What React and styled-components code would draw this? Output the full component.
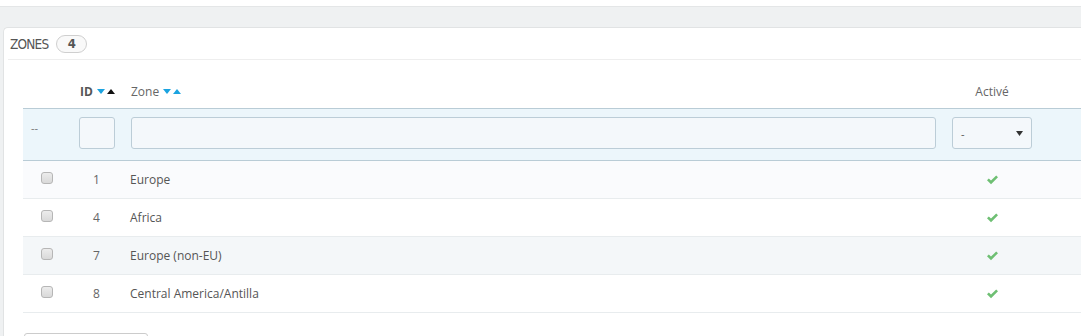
import React from 'react';
import styled, { createGlobalStyle } from 'styled-components';

const GlobalStyle = createGlobalStyle`
	html, body {
		margin: 0;
		padding: 0;
		background: #eff1f2;
		overflow: hidden;
	}
	body {
		font-family: 'Open Sans', 'Liberation Sans', sans-serif;
		font-size: 12px;
		color: #555;
	}
`;

const zones = [
	{ id: 1, name: 'Europe' },
	{ id: 4, name: 'Africa' },
	{ id: 7, name: 'Europe (non-EU)' },
	{ id: 8, name: 'Central America/Antilla' }
];

const DivPage = styled.div`
	width: 1081px;
	height: 336px;
	overflow: hidden;
`;
const DivTopStrip = styled.div`
	height: 6px;
	background: #fff;
	border-bottom: 1px solid #e4e6e7;
`;
const DivMain = styled.div`
	padding: 20px 0 0 3px;
`;
const SectionPanel = styled.section`
	width: 1140px;
	background: #fff;
	border: 1px solid #e1e3e4;
	border-right: none;
	border-radius: 5px 0 0 0;
	padding: 0 0 0 4px;
`;
const HeaderPanel = styled.header`
	display: flex;
	align-items: center;
	gap: 8px;
	height: 31px;
	padding: 0 0 0 2px;
	border-bottom: 1px solid #eee;
`;
const SpanTitle = styled.span`
	font-family: 'DejaVu Sans Condensed', 'DejaVu Sans', sans-serif;
	font-size: 13.5px;
	text-transform: uppercase;
	color: #555;
	letter-spacing: -0.8px;
`;
const SpanBadge = styled.span`
	display: inline-flex;
	align-items: center;
	justify-content: center;
	width: 29px;
	height: 16px;
	border: 1px solid #cfcfcf;
	border-radius: 9px;
	background: #f9f9f9;
	font-family: 'DejaVu Sans Condensed', 'DejaVu Sans', sans-serif;
	font-size: 13px;
	font-weight: bold;
	color: #555;
`;
const DivTable = styled.div`
	margin: 18px 0 0 15px;
`;
const DivRow = styled.div`
	display: grid;
	grid-template-columns: 48px 52px 821px 96px 1fr;
	background: ${(p) => p.$bg || '#fff'};
	border-bottom: 1px solid ${(p) => p.$line || '#e8ecee'};
	${(p) => p.$top && `border-top: 1px solid ${p.$top};`}
`;
const DivCell = styled.div`
	display: flex;
	align-items: ${(p) => p.$align || 'center'};
	justify-content: ${(p) => p.$justify || 'flex-start'};
	padding: ${(p) => p.$pad || '0 8px'};
	height: ${(p) => p.$h || 37}px;
	box-sizing: border-box;
`;
const SpanHead = styled.span`
	display: inline-flex;
	align-items: center;
	gap: 3px;
	font-weight: ${(p) => (p.$bold ? 700 : 400)};
	color: ${(p) => (p.$bold ? '#555' : '#666')};
	line-height: 17px;
`;
const SpanArrows = styled.span`
	display: inline-flex;
	align-items: center;
	gap: 2px;
	margin-left: 1px;
`;
const InputFilter = styled.input`
	width: 100%;
	height: 32px;
	box-sizing: border-box;
	border: 1px solid #bccdd7;
	border-radius: 3px;
	background: #f4f8fb;
	outline: none;
`;
const DivSelect = styled.div`
	width: 100%;
	height: 32px;
	box-sizing: border-box;
	display: flex;
	align-items: center;
	justify-content: space-between;
	padding: 0 8px 0 8px;
	border: 1px solid #bccdd7;
	border-radius: 3px;
	background: #f4f8fb;
	color: #555;
	font-size: 11px;
`;
const SpanDash = styled.span`
	color: #777;
	font-size: 11px;
`;
const InputCheck = styled.input`
	appearance: none;
	margin: 0;
	width: 12px;
	height: 12px;
	border: 1px solid #b6b6b6;
	border-radius: 3px;
	background: linear-gradient(#ececec, #d9d9d9);
`;
const SpanId = styled.span`
	color: #666;
`;
const SpanZone = styled.span`
	color: #555;
`;
const FooterPanel = styled.footer`
	padding: 20px 0 0 16px;
`;
const ButtonBulk = styled.button`
	width: 124px;
	height: 30px;
	border: 1px solid #ccc;
	border-radius: 3px;
	background: #fff;
`;

const Tri = ({ up, color, w = 8, h = 5 }) => (
	<svg width={w} height={h} viewBox={`0 0 ${w} ${h}`}>
		<path d={up ? `M0 ${h} L${w / 2} 0 L${w} ${h} Z` : `M0 0 L${w} 0 L${w / 2} ${h} Z`} fill={color} />
	</svg>
);

const Check = () => (
	<svg width="13" height="10" viewBox="0 0 13 10">
		<path d="M1 5.2 L2.8 3.4 L5 5.6 L10.2 0.4 L12 2.2 L5 9.2 Z" fill="#6ebf73" />
	</svg>
);

const App = () => (
	<>
		<GlobalStyle />
		<DivPage>
			<DivTopStrip />
			<DivMain>
				<SectionPanel>
					<HeaderPanel>
						<SpanTitle>Zones</SpanTitle>
						<SpanBadge>4</SpanBadge>
					</HeaderPanel>
					<DivTable>
						<DivRow $line="transparent">
							<DivCell $h={29} />
							<DivCell $h={29} $align="flex-end" $pad="0 8px 7px 9px">
								<SpanHead $bold>
									ID
									<SpanArrows>
										<Tri color="#1ba3e0" />
										<Tri up color="#111" />
									</SpanArrows>
								</SpanHead>
							</DivCell>
							<DivCell $h={29} $align="flex-end" $pad="0 8px 7px 8px">
								<SpanHead>
									Zone
									<SpanArrows>
										<Tri color="#1ba3e0" />
										<Tri up color="#1ba3e0" />
									</SpanArrows>
								</SpanHead>
							</DivCell>
							<DivCell $h={29} $align="flex-end" $justify="center" $pad="0 8px 7px">
								<SpanHead>Activé</SpanHead>
							</DivCell>
							<DivCell $h={29} />
						</DivRow>
						<DivRow $bg="#ecf6fb" $top="#b9ccd6" $line="#b9ccd6">
							<DivCell $h={51} $pad="0 8px 14px">
								<SpanDash>--</SpanDash>
							</DivCell>
							<DivCell $h={51} $pad="0 8px 3px">
								<InputFilter />
							</DivCell>
							<DivCell $h={51} $pad="0 8px 3px">
								<InputFilter />
							</DivCell>
							<DivCell $h={51} $pad="0 8px 3px">
								<DivSelect>
									<span>-</span>
									<Tri color="#333" w={7} h={5} />
								</DivSelect>
							</DivCell>
							<DivCell $h={51} />
						</DivRow>
						{zones.map((zone, i) => (
							<DivRow
								key={zone.id}
								$bg={i === 0 ? '#fafbfd' : i === 2 ? '#f4f7f9' : '#fff'}
							>
								<DivCell $justify="center" $pad="0 1px 3px 0">
									<InputCheck type="checkbox" />
								</DivCell>
								<DivCell $justify="center" $pad="0 1px 0 0">
									<SpanId>{zone.id}</SpanId>
								</DivCell>
								<DivCell $pad="0 8px 0 7px">
									<SpanZone>{zone.name}</SpanZone>
								</DivCell>
								<DivCell $justify="center" $pad="0 8px 0 9px">
									<Check />
								</DivCell>
								<DivCell />
							</DivRow>
						))}
					</DivTable>
					<FooterPanel>
						<ButtonBulk />
					</FooterPanel>
				</SectionPanel>
			</DivMain>
		</DivPage>
	</>
);

export default App;
